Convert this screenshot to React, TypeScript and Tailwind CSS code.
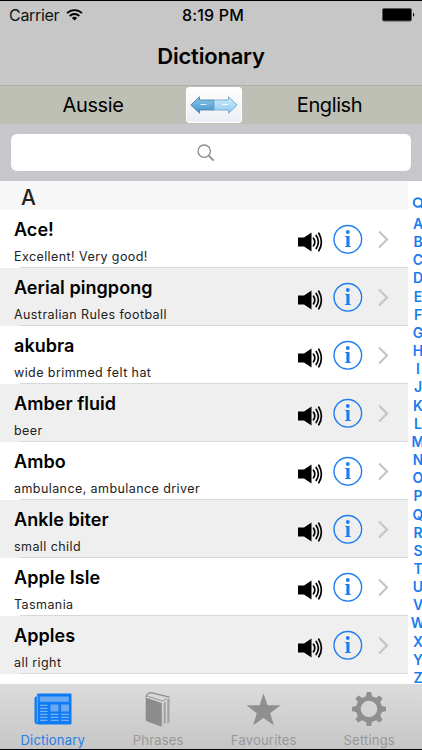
import React from 'react';

const entries = [
  { word: 'Ace!', meaning: 'Excellent! Very good!' },
  { word: 'Aerial pingpong', meaning: 'Australian Rules football' },
  { word: 'akubra', meaning: 'wide brimmed felt hat' },
  { word: 'Amber fluid', meaning: 'beer' },
  { word: 'Ambo', meaning: 'ambulance, ambulance driver' },
  { word: 'Ankle biter', meaning: 'small child' },
  { word: 'Apple Isle', meaning: 'Tasmania' },
  { word: 'Apples', meaning: 'all right' },
];

const letters = 'ABCDEFGHIJKLMNOPQRSTUVWXYZ'.split('');

function WifiIcon() {
  return (
    <svg width="17" height="12" viewBox="0 0 17 12" fill="none" stroke="#000" strokeWidth="1.8">
      <path d="M1 4.2a10.6 10.6 0 0 1 15 0" />
      <path d="M3.7 7a6.8 6.8 0 0 1 9.6 0" />
      <path d="M8.5 11.6 5.9 9a3.7 3.7 0 0 1 5.2 0z" fill="#000" stroke="none" />
    </svg>
  );
}

function BatteryIcon() {
  return (
    <svg width="33" height="14" viewBox="0 0 33 14">
      <rect x="0.5" y="0.5" width="29" height="12.5" rx="1.5" fill="#000" stroke="#555" />
      <path d="M31 4.7c1.6.4 1.6 3.7 0 4.1z" fill="#111" />
    </svg>
  );
}

function SwapIcon() {
  return (
    <svg width="48" height="18" viewBox="0 0 48 18">
      <defs>
        <linearGradient id="left" x1="0" y1="0" x2="0" y2="1">
          <stop offset="0" stopColor="#8cc8ea" />
          <stop offset="1" stopColor="#4593cb" />
        </linearGradient>
        <linearGradient id="right" x1="0" y1="0" x2="0" y2="1">
          <stop offset="0" stopColor="#d3eefd" />
          <stop offset="1" stopColor="#8dc8ee" />
        </linearGradient>
      </defs>
      <path d="M.8 9 9.5.8V4H24v10H9.5v3.2z" fill="url(#left)" stroke="#4a87b0" strokeWidth="0.9" />
      <path d="M47.2 9 38.5.8V4H24v10h14.5v3.2z" fill="url(#right)" stroke="#70a9cc" strokeWidth="0.9" />
      <path d="M10.5 8.5h6M32 8.5h6" stroke="#fff" strokeWidth="1.2" opacity="0.85" />
    </svg>
  );
}

function SpeakerIcon() {
  return (
    <svg width="26" height="20" viewBox="0 0 26 20">
      <path d="M0 5.5h6L13.5.4v19.2L6 14.5H0z" fill="#000" />
      <g fill="none" stroke="#000" strokeWidth="1.7" strokeLinecap="round">
        <path d="M15.5 6.2q2.6 3.8 0 7.6" />
        <path d="M18.2 3.5q4.4 6.5 0 13" />
        <path d="M20.8 1.2q5.2 8.8 0 17.6" />
      </g>
    </svg>
  );
}

function InfoIcon() {
  return (
    <svg width="30" height="30" viewBox="0 0 30 30">
      <circle cx="14.8" cy="15.3" r="13.8" fill="none" stroke="#1d7df0" strokeWidth="1.4" />
      <circle cx="14.8" cy="8" r="1.9" fill="#1d7df0" />
      <path d="M12.1 12h4.4v9.9l1.4.4v.8h-6v-.8l1.5-.4v-8.7l-1.3-.4z" fill="#1d7df0" />
    </svg>
  );
}

function ChevronIcon() {
  return (
    <svg width="12" height="18" viewBox="0 0 12 18" fill="none" stroke="#c5c5ca" strokeWidth="2.2">
      <path d="m1 1.5 8 8-8 8" />
    </svg>
  );
}

function NewspaperIcon() {
  return (
    <svg width="38" height="32" viewBox="0 0 38 32">
      <path d="M2 3.5h3V31H2.5Q.5 31 .5 28.5v-23q0-2 1.5-2z" fill="#0f7af5" />
      <rect x="3" y="0.5" width="34.5" height="31" rx="1" fill="#0f7af5" />
      <path d="M5.8 3.5h29v5.2h-29zM16.500 11.500h8v7h-8zM27 11.500h8v7h-8z" fill="#6baaf0" />
      <path
        d="M6 12.3h7.5M6 15.3h7.5M6 18.3h7.5M6 21.3h7.5M6 24.3h7.5M6 27.3h7.5M16.5 21.3h8M16.5 24.3h8M16.5 27.3h8M27 21.3h8M27 24.3h8M27 27.3h8"
        stroke="#75b0f0"
        strokeWidth="1.2"
      />
      <path d="M3.3 2.5v27" stroke="#8fbcec" strokeWidth="0.8" />
    </svg>
  );
}

function BookIcon() {
  return (
    <svg width="26" height="35" viewBox="0 0 26 35">
      <path d="M.7 5.5 16.8 11v23.7L2.3 29.5Q.7 29 .7 27z" fill="#8c8c8c" />
      <path d="M1 5.2Q2 1 5.8.7l18.7 4.5" fill="none" stroke="#8c8c8c" strokeWidth="1.3" />
      <path d="M2.5 4.2 17.5 9 22 6.5" fill="none" stroke="#999" strokeWidth="1" />
      <path d="m18.7 10.5 2-1V31l-2 1.5zM22.3 7.5l2.2-1.5v24.5l-2.2 1.2z" fill="#a2a2a2" />
    </svg>
  );
}

function StarIcon() {
  return (
    <svg width="35" height="33" viewBox="0 0 35 33">
      <path d="m17.5.5 4 11.7 13 .1-10.3 8 3.7 12-10.4-7.2-10.4 7.2 3.7-12L.5 12.3l13-.1z" fill="#8f8f8f" />
    </svg>
  );
}

function GearIcon() {
  const teeth = [0, 45, 90, 135, 180, 225, 270, 315];
  return (
    <svg width="36" height="36" viewBox="0 0 36 36">
      <circle cx="18" cy="18" r="10.7" fill="none" stroke="#8f8f8f" strokeWidth="4.8" />
      {teeth.map((angle) => (
        <path
          key={angle}
          d="M14.8 6.2 15.7 1.5q.1-.5.6-.5h3.4q.5 0 .6.5l.9 4.7z"
          fill="#8f8f8f"
          transform={`rotate(${angle} 18 18)`}
        />
      ))}
    </svg>
  );
}

const tabs = [
  { label: 'Dictionary', icon: <NewspaperIcon />, color: 'text-[#247fe8]' },
  { label: 'Phrases', icon: <BookIcon />, color: 'text-[#999]' },
  { label: 'Favourites', icon: <StarIcon />, color: 'text-[#999]' },
  { label: 'Settings', icon: <GearIcon />, color: 'text-[#999]' },
];

function Header() {
  return (
    <header className="h-[86px] border-t border-b border-t-black border-b-[#afafad] bg-[#c7c7c7]">
      <div className="grid h-7 grid-cols-3 items-center pl-[9px] pr-[7px]">
        <div className="flex items-center gap-[7px] text-[16px] tracking-[-0.3px] text-[#111]">
          Carrier
          <WifiIcon />
        </div>
        <div className="pl-[2px] text-center text-[16px] font-medium tracking-[0.2px]">8:19 PM</div>
        <div className="flex justify-end">
          <BatteryIcon />
        </div>
      </div>
      <h1 className="pt-[11px] text-center text-[22px] leading-[32px] font-semibold tracking-[-0.2px]">Dictionary</h1>
    </header>
  );
}

function EntryRow({ word, meaning }: { word: string; meaning: string }) {
  return (
    <li className="relative flex h-[58px] even:bg-[#efefef]">
      <div className="flex-1 pl-[14px] pt-[7px] whitespace-nowrap">
        <div className="text-[18px] leading-[26px] font-semibold tracking-[0.05px]">{word}</div>
        <div className="pt-[5px] text-[12.5px] leading-[18px] tracking-[0.42px] text-[#222]">{meaning}</div>
      </div>
      <div className="flex items-start pr-[18px]">
        <div className="mt-[22px] mr-[9px]">
          <SpeakerIcon />
        </div>
        <div className="mt-[14px] mr-[15px]">
          <InfoIcon />
        </div>
        <div className="mt-[20px]">
          <ChevronIcon />
        </div>
      </div>
      <div className="absolute right-0 bottom-0 left-5 h-px bg-[#d8d8da]" />
    </li>
  );
}

export default function App() {
  return (
    <div className="flex h-[750px] w-[422px] flex-col overflow-hidden bg-white font-['Inter',sans-serif] text-black">
      <Header />

      <div className="flex h-[38px] shrink-0 items-center bg-[#bfc0b5] text-[20px] tracking-[-0.4px]">
        <div className="w-[186px] text-center">Aussie</div>
        <button className="flex h-9 w-14 items-center justify-center rounded-[3px] border border-white bg-gradient-to-b from-white to-[#eceef3]">
          <SwapIcon />
        </button>
        <div className="flex-1 pr-[5px] text-center">English</div>
      </div>

      <div className="h-[57px] shrink-0 bg-[#c7c6cb] px-[11px] pt-[10px]">
        <div className="flex h-[37px] items-center justify-center rounded-md bg-white pr-[11px]">
          <svg width="18" height="18" viewBox="0 0 18 18" fill="none" stroke="#8d8d90">
            <circle cx="7.2" cy="7.2" r="6.2" strokeWidth="1.3" />
            <path d="m11.7 11.7 5 5" strokeWidth="1.8" />
          </svg>
        </div>
      </div>

      <div className="flex h-[503px] shrink-0 overflow-hidden">
        <div className="w-[408px] shrink-0">
          <h2 className="h-[29px] bg-[#f7f7f7] pl-[21px] text-[21px] leading-[33px] font-medium text-[#222]">A</h2>
          <ul>
            {entries.map((entry) => (
              <EntryRow key={entry.word} {...entry} />
            ))}
          </ul>
        </div>
        <nav className="flex w-[20px] shrink-0 flex-col items-center pt-[15px] text-[14px] font-semibold text-[#1a7cec]">
          <svg className="mb-[6px] shrink-0" width="13" height="13" viewBox="0 0 13 13" fill="none" stroke="#1a7cec" strokeWidth="2">
            <circle cx="6" cy="6.5" r="4.2" />
            <path d="m8.5 9.5 2.500 2.500" />
          </svg>
          {letters.map((letter) => (
            <span key={letter} className="h-[18.16px] shrink-0 leading-[18.16px]">
              {letter}
            </span>
          ))}
        </nav>
      </div>

      <footer className="grid h-[66px] shrink-0 grid-cols-4 border-b border-black bg-gradient-to-b from-[#dcdcdc] to-[#c6c6c6]">
        {tabs.map(({ label, icon, color }) => (
          <div key={label} className={`flex flex-col items-center pt-[7px] text-[13px] tracking-[0.2px] ${color}`}>
            <div className="flex h-9 items-center">{icon}</div>
            <span className="leading-[26px]">{label}</span>
          </div>
        ))}
      </footer>
    </div>
  );
}
